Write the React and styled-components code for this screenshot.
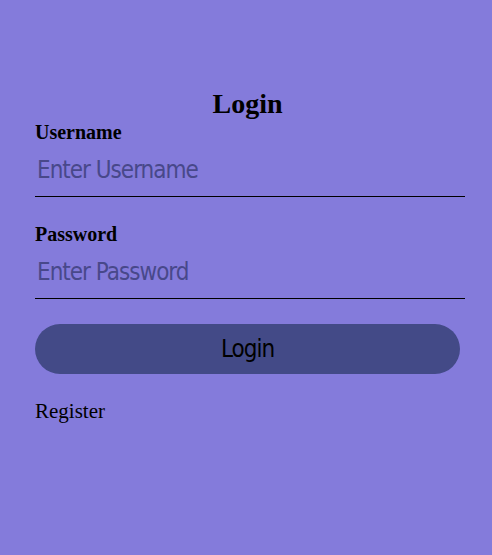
import React from "react";
import styled, { createGlobalStyle } from "styled-components";

const Global = createGlobalStyle`
  html, body {
    margin: 0;
    padding: 0;
    background: #847bdb;
    font-family: "Liberation Serif", serif;
  }
`;

const Page = styled.div`
  width: 492px;
  height: 555px;
  background: #847bdb;
  padding: 88px 32px 0 35px;
  box-sizing: border-box;
`;

const Title = styled.h2`
  margin: 0 0 1px;
  text-align: center;
  font-size: 28px;
  font-weight: bold;
  color: #000;
  line-height: 32px;
`;

const Field = styled.div`
  display: flex;
  flex-direction: column;
  margin-bottom: ${({ gap }) => gap || 0}px;
`;

const Label = styled.label`
  font-size: 20px;
  font-weight: bold;
  color: #000;
  line-height: 22px;
`;

const Input = styled.input`
  box-sizing: content-box;
  width: 100%;
  height: 53px;
  border: none;
  border-bottom: 1px solid #000;
  background: transparent;
  outline: none;
  padding: 0 3px 0 2px;
  font-family: "DejaVu Sans", sans-serif;
  font-stretch: condensed;
  font-size: 24px;
  letter-spacing: -1px;
  color: #000;

  &::placeholder {
    color: #48488a;
  }
`;

const Button = styled.button`
  display: block;
  width: 100%;
  height: 50px;
  margin-top: 25px;
  border: none;
  border-radius: 25px;
  background: #434a87;
  color: #000;
  font-family: "DejaVu Sans", sans-serif;
  font-stretch: condensed;
  font-size: 24px;
  letter-spacing: -1px;
`;

const RegisterLink = styled.div`
  margin-top: 25px;
  font-size: 21px;
  line-height: 24px;
  color: #000;
`;

export default function App() {
  return (
    <>
      <Global />
      <Page>
        <Title>Login</Title>
        <Field gap={26}>
          <Label>Username</Label>
          <Input type="text" placeholder="Enter Username" />
        </Field>
        <Field>
          <Label>Password</Label>
          <Input type="password" placeholder="Enter Password" />
        </Field>
        <Button>Login</Button>
        <RegisterLink>Register</RegisterLink>
      </Page>
    </>
  );
}
